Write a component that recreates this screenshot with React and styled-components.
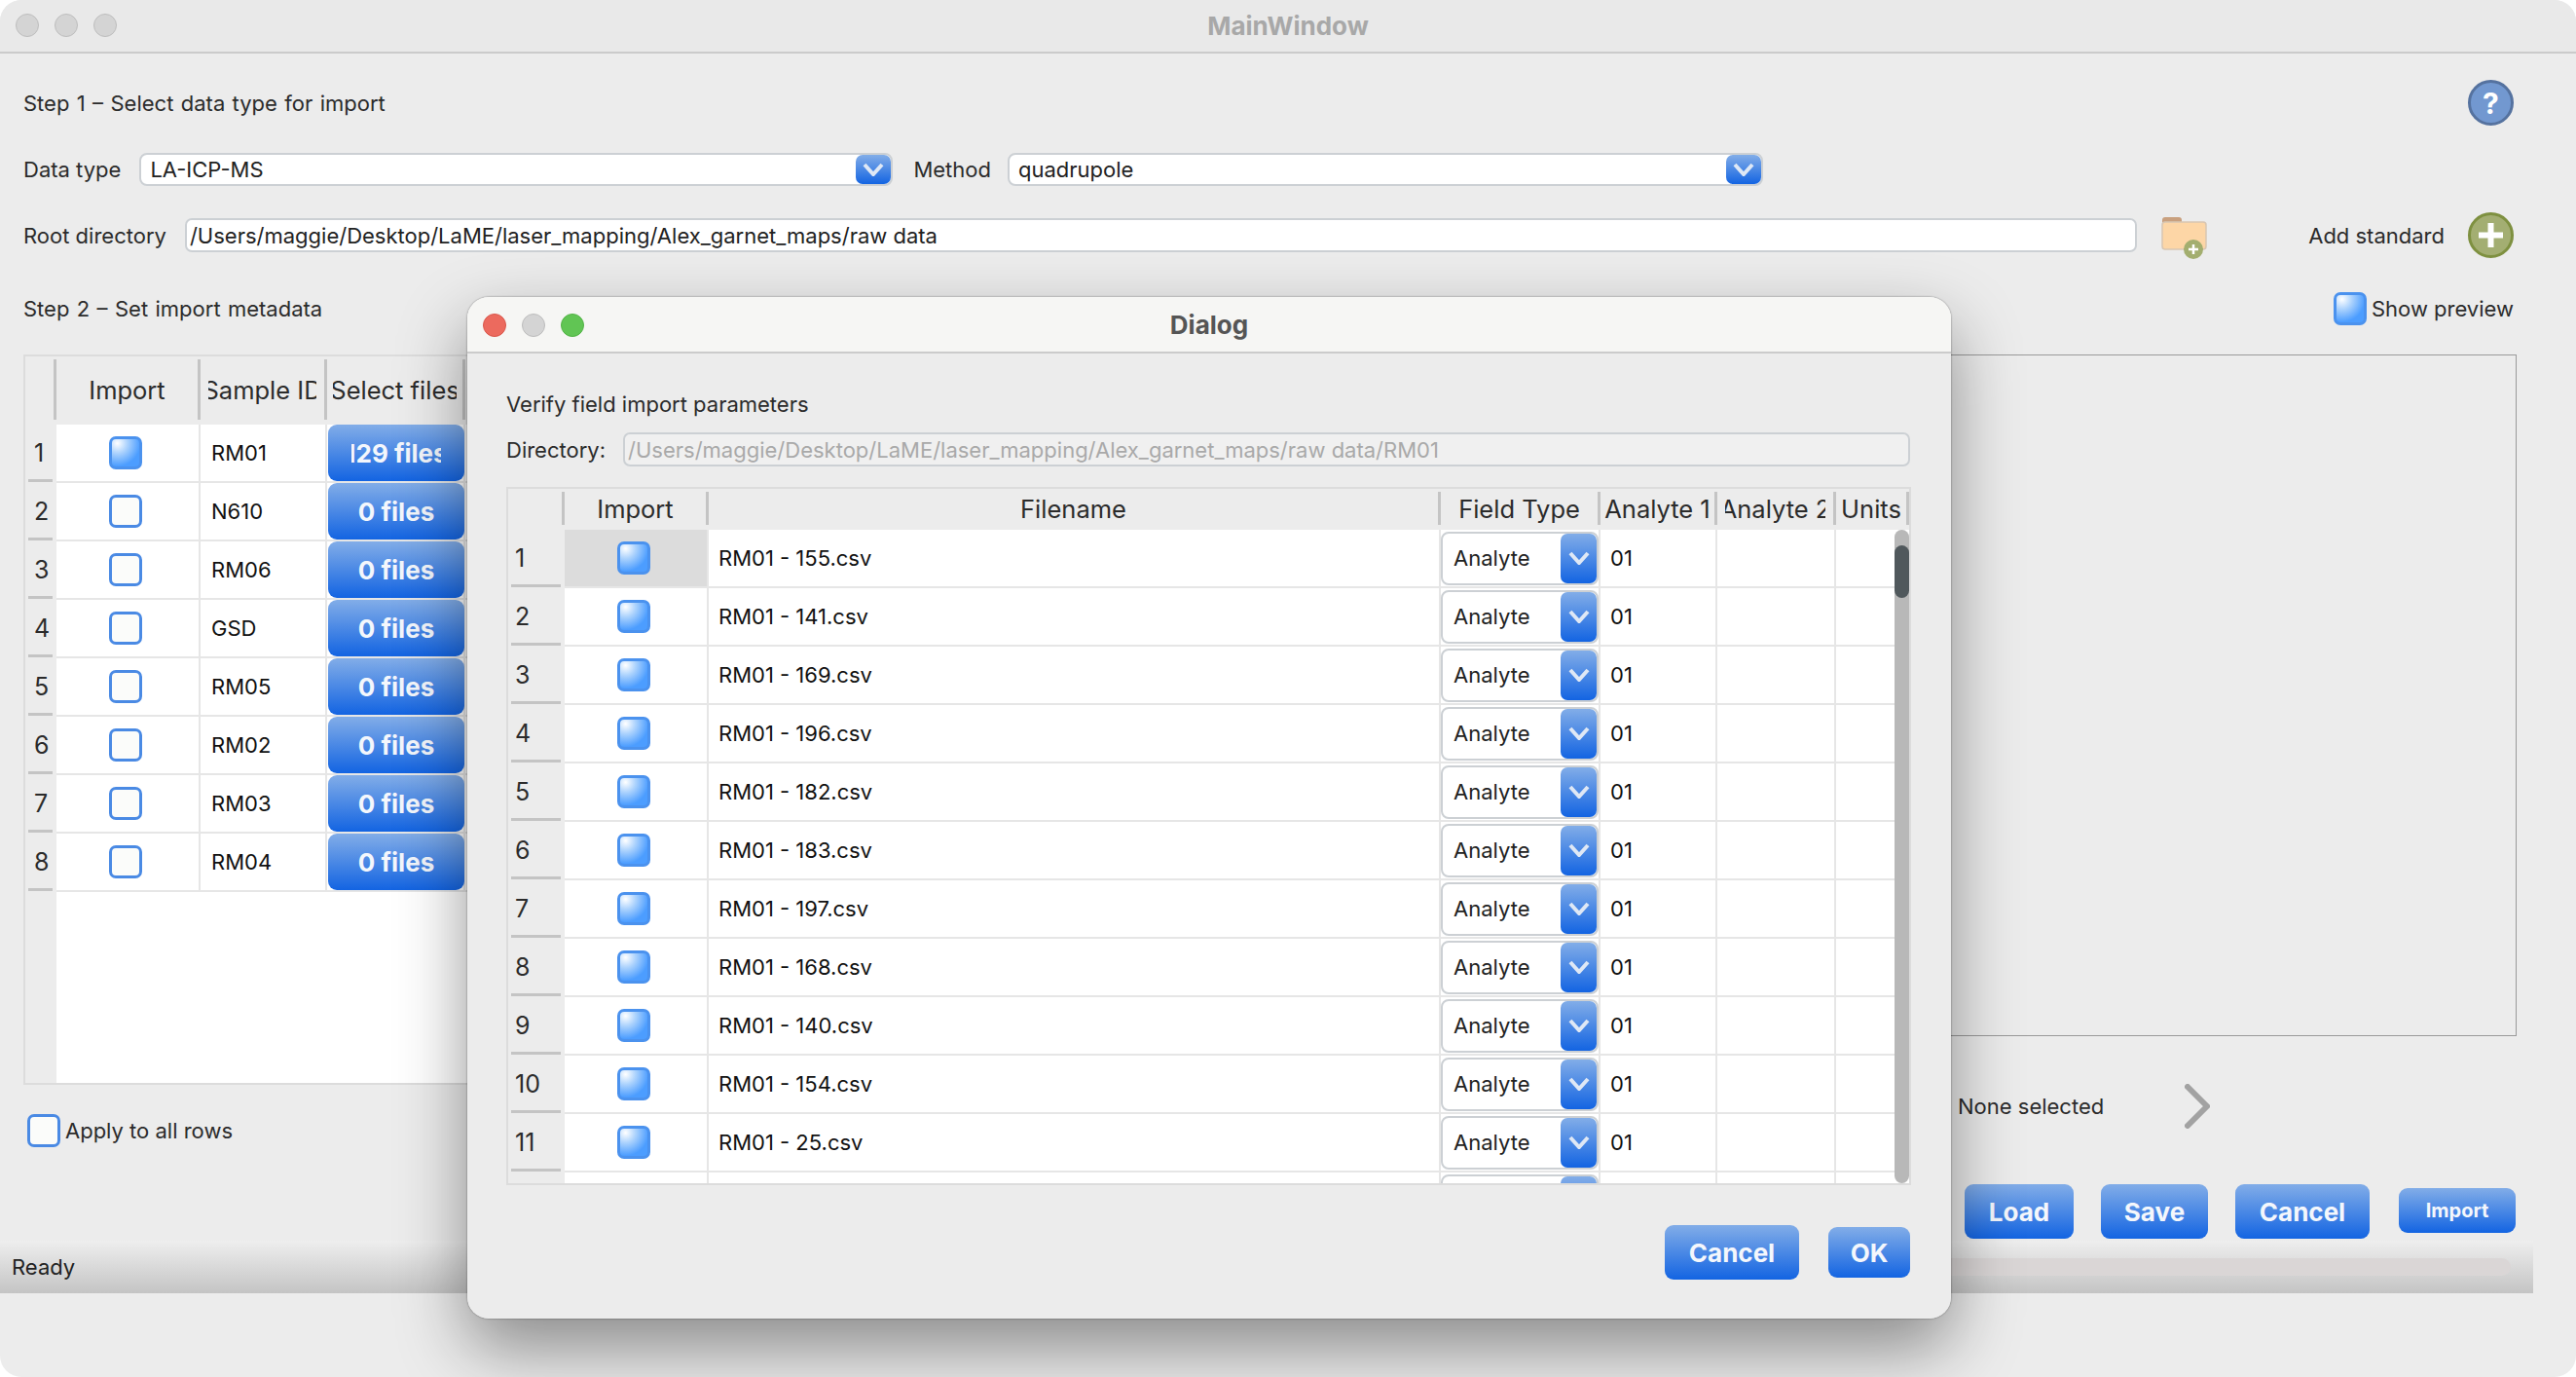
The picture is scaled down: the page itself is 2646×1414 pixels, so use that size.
import React from 'react'
import styled, { createGlobalStyle } from 'styled-components'

const GlobalStyle = createGlobalStyle`
  html, body {
    margin: 0;
    padding: 0;
    background: #fff;
  }
  * {
    box-sizing: border-box;
  }
  body {
    font-family: Inter, "Liberation Sans", sans-serif;
    color: #2b2b2b;
  }
`

const blue = 'linear-gradient(180deg, #82ade8 0%, #1364e2 100%)'

const samples = ['RM01', 'N610', 'RM06', 'GSD', 'RM05', 'RM02', 'RM03', 'RM04']
const files = ['155', '141', '169', '196', '182', '183', '197', '168', '140', '154', '25']

const leftCols = '32px 148px 130px 142px 1fr'
const dialogCols = '58px 148px 752px 164px 120px 122px 75px'

const Chevron = ({ w = 22, h = 14 }) => (
  <svg width={w} height={h} viewBox="0 0 22 14">
    <polyline points="2,2 11,12 20,2" fill="none" stroke="#dfe8f5" strokeWidth="4" />
  </svg>
)

const FolderIcon = () => (
  <svg width="48" height="48" viewBox="0 0 48 48">
    <path d="M1 8 a3 3 0 0 1 3 -3 h14 a3 3 0 0 1 3 3 v3 H1z" fill="#c9a07e" />
    <rect x="1" y="10" width="45" height="28" rx="3" fill="#fdd6a6" stroke="#d8c6b2" strokeWidth="1.5" />
    <circle cx="33" cy="38" r="10" fill="#a3ae6f" />
    <path d="M33 33 v10 M28 38 h10" stroke="#fff" strokeWidth="2.5" />
  </svg>
)

const PlusIcon = () => (
  <svg width="47" height="47" viewBox="0 0 47 47">
    <circle cx="23.5" cy="23.5" r="22" fill="#a3ae72" stroke="#7e9040" strokeWidth="3" />
    <path d="M23.5 11 v25 M11 23.5 h25" stroke="#fff" strokeWidth="6" />
  </svg>
)

const RightChevron = () => (
  <svg width="26" height="46" viewBox="0 0 26 46">
    <polyline points="3,3 23,23 3,43" fill="none" stroke="#a2a2a2" strokeWidth="6" strokeLinecap="round" strokeLinejoin="round" />
  </svg>
)

const Window = styled.div`
  position: relative;
  width: 2646px;
  height: 1414px;
  display: flex;
  flex-direction: column;
  background: #ececec;
  border-radius: 22px;
  overflow: hidden;
`

const TitleBar = styled.div`
  position: relative;
  flex: none;
  height: ${(p) => (p.$dialog ? 58 : 55)}px;
  display: flex;
  align-items: center;
  justify-content: center;
  background: ${(p) => (p.$dialog ? '#f6f6f4' : '#e9e9e9')};
  border-bottom: 2px solid #cbcbcb;
  font-size: 26px;
  font-weight: 700;
  color: ${(p) => (p.$dialog ? '#555' : '#a8a8a8')};
`

const Lights = styled.div`
  position: absolute;
  left: ${(p) => p.$left}px;
  top: ${(p) => p.$top}px;
  display: flex;
  gap: 16px;
`

const Light = styled.span`
  width: 24px;
  height: 24px;
  border-radius: 50%;
  background: ${(p) => p.$color || '#d4d4d4'};
  border: 1px solid ${(p) => p.$edge || '#bdbdbd'};
`

const Content = styled.div`
  flex: none;
  height: 1219px;
  display: flex;
  flex-direction: column;
  padding: 27px 64px 0 24px;
`

const TopRow = styled.div`
  flex: none;
  height: ${(p) => p.$height}px;
  margin-top: ${(p) => p.$top || 0}px;
  display: flex;
  align-items: center;
  font-size: 22px;
`

const Label = styled.span`
  margin-left: ${(p) => p.$left || 0}px;
  white-space: nowrap;
  color: #2b2b2b;
`

const StepLabel = styled(Label)`
  word-spacing: 1.2px;
`

const Spacer = styled.div`
  flex: 1;
`

const RoundIcon = styled.div`
  width: 47px;
  height: 47px;
  border-radius: 50%;
  display: flex;
  align-items: center;
  justify-content: center;
  background: #7298d0;
  border: 3px solid #55729f;
  color: #fff;
  font-size: 30px;
  font-weight: 700;
`

const ComboBox = styled.div`
  width: ${(p) => (p.$width ? `${p.$width}px` : '100%')};
  height: ${(p) => p.$height}px;
  margin-left: ${(p) => p.$left || 0}px;
  padding-left: ${(p) => p.$pad || 9}px;
  display: flex;
  align-items: center;
  justify-content: space-between;
  background: #fff;
  border: 2px solid #ccd0d4;
  border-radius: 8px;
  font-size: 22px;
  color: #222;
`

const ComboArrow = styled.div`
  width: ${(p) => p.$width}px;
  height: 100%;
  display: flex;
  align-items: center;
  justify-content: center;
  background: ${blue};
  border-radius: 7px;
`

const PathInput = styled.div`
  height: 35px;
  width: ${(p) => p.$width}px;
  margin-left: ${(p) => p.$left}px;
  padding-left: 3px;
  display: flex;
  align-items: center;
  background: ${(p) => (p.$disabled ? '#f0f0f0' : '#fff')};
  border: 2px solid #ccd0d4;
  border-radius: 7px;
  font-size: 22px;
  color: ${(p) => (p.$disabled ? '#a9a9a9' : '#222')};
`

const FolderSlot = styled.div`
  margin-left: 25px;
  height: 47px;
  line-height: 0;
`

const PlusSlot = styled.div`
  margin-left: 24px;
  line-height: 0;
`

const CheckBox = styled.span`
  flex: none;
  display: inline-block;
  width: 34px;
  height: 34px;
  border-radius: 7px;
  border: 3px solid ${(p) => (p.$on ? '#4b92ee' : '#4a8ae4')};
  background: ${(p) =>
    p.$on
      ? 'radial-gradient(circle at 20% 15%, #ffffff 0%, #abd2fd 32%, #4c9dff 72%)'
      : '#fbfcfa'};
`

const CheckLabel = styled.div`
  display: flex;
  align-items: center;
  gap: 5px;
  font-size: 22px;
`

const Panes = styled.div`
  flex: none;
  margin-top: 30px;
  display: grid;
  grid-template-columns: 900px 1fr;
  column-gap: 40px;
`

const LeftPane = styled.div`
  display: flex;
  flex-direction: column;
`

const RightPane = styled.div`
  margin-right: -3px;
  display: flex;
  flex-direction: column;
  align-items: flex-end;
`

const Table = styled.div`
  position: relative;
  height: ${(p) => p.$height}px;
  width: ${(p) => (p.$width ? `${p.$width}px` : '100%')};
  background: linear-gradient(90deg, #ececec ${(p) => p.$head}px, #fff ${(p) => p.$head}px);
  border: 2px solid #dcdcdc;
  overflow: hidden;
`

const HeaderRow = styled.div`
  display: grid;
  grid-template-columns: ${(p) => p.$cols};
  height: ${(p) => p.$height}px;
  padding: 3px 0 5px;
  background: #ececec;
`

const HeaderCell = styled.div`
  display: flex;
  align-items: center;
  justify-content: center;
  overflow: hidden;
  padding: 0 ${(p) => p.$clip || 0}px;
  border-right: 3px solid #c4c4c4;
  font-size: 25.5px;
  color: #2b2b2b;
`

const Clip = styled.span`
  display: flex;
  justify-content: center;
  width: ${(p) => (p.$width ? `${p.$width}px` : '100%')};
  overflow: hidden;
  white-space: nowrap;
`

const Row = styled.div`
  display: grid;
  grid-template-columns: ${(p) => p.$cols};
  height: 60px;
`

const RowNumber = styled.div`
  position: relative;
  display: flex;
  align-items: center;
  padding-left: ${(p) => p.$pad}px;
  padding-bottom: 2px;
  background: #ececec;
  font-size: 25px;
  color: #2b2b2b;

  &::after {
    content: '';
    position: absolute;
    left: 3px;
    right: 4px;
    bottom: 1px;
    height: 3px;
    background: #c4c4c4;
  }
`

const Cell = styled.div`
  display: flex;
  align-items: center;
  justify-content: ${(p) => (p.$center ? 'center' : 'flex-start')};
  padding-left: ${(p) => p.$pad || 0}px;
  background: ${(p) => (p.$shade ? '#dcdcdc' : '#fff')};
  border-right: 2px solid #e6e6e6;
  border-bottom: 2px solid #e6e6e6;
  font-size: 22px;
  color: #111;
  min-width: 0;
`

const PlainCell = styled.div`
  background: #fff;
  border-bottom: 2px solid #e6e6e6;
`

const CheckOffset = styled.div`
  margin-left: ${(p) => p.$left}px;
  line-height: 0;
`

const BlueButton = styled.div`
  flex: none;
  width: ${(p) => p.$width}px;
  height: ${(p) => p.$height}px;
  margin-left: ${(p) => p.$left || 0}px;
  margin-top: ${(p) => p.$top || 0}px;
  display: flex;
  align-items: center;
  justify-content: center;
  overflow: hidden;
  background: ${blue};
  border-radius: 9px;
  font-size: ${(p) => p.$size || 26}px;
  font-weight: 700;
  color: #f4f7fc;
`

const ApplyRow = styled.div`
  margin-top: 30px;
  padding-left: 4px;
`

const PreviewFrame = styled.div`
  width: 100%;
  height: 700px;
  border: 1.5px solid #9a9a9a;
`

const SelectRow = styled.div`
  width: 100%;
  height: 46px;
  margin-top: 49px;
  display: flex;
  align-items: center;
  gap: 83px;
  font-size: 22px;
  padding-left: 1047px;
`

const ActionRow = styled.div`
  margin-top: 57px;
  margin-right: 1px;
  display: flex;
  align-items: flex-start;
  gap: 28px;
`

const StatusBar = styled.div`
  flex: none;
  width: 2602px;
  height: 54px;
  display: flex;
  align-items: center;
  justify-content: space-between;
  padding: 0 23px 0 12px;
  background: linear-gradient(180deg, #eeeeee 0%, #c4c4c4 100%);
  font-size: 22px;
  color: #222;
`

const Progress = styled.div`
  width: 1400px;
  height: 18px;
  border-radius: 9px;
  background: #dad6d6;
`

const Dialog = styled.div`
  position: absolute;
  left: 480px;
  top: 305px;
  width: 1524px;
  height: 1049px;
  display: flex;
  flex-direction: column;
  background: #ececec;
  border-radius: 22px;
  overflow: hidden;
`

const DialogShadow = styled.div`
  position: absolute;
  left: 480px;
  top: 305px;
  width: 1524px;
  height: 1049px;
  border-radius: 22px;
  box-shadow: 0 30px 70px rgba(0, 0, 0, 0.42), 0 0 2px rgba(0, 0, 0, 0.5);
`

const DialogBody = styled.div`
  flex: 1;
  display: flex;
  flex-direction: column;
  padding: 0 42px 0 40px;
`

const DialogLabel = styled.div`
  margin-top: 39px;
  height: 26px;
  display: flex;
  align-items: center;
  font-size: 22px;
`

const DirectoryRow = styled.div`
  margin-top: 16px;
  display: flex;
  align-items: center;
  font-size: 22px;
`

const TableSpace = styled.div`
  margin-top: 21px;
`

const Scrollbar = styled.div`
  position: absolute;
  right: 0;
  top: 42px;
  bottom: 0;
  width: 15px;
  border-radius: 8px;
  background: #b8b8b8;
`

const ScrollThumb = styled.div`
  margin-top: 16px;
  height: 54px;
  border-radius: 8px;
  background: #50585c;
`

const DialogActions = styled.div`
  margin-top: 41px;
  display: flex;
  align-items: center;
  justify-content: flex-end;
  gap: 30px;
`

const Combo = ({ width, height, left, pad, arrow, children }) => (
  <ComboBox $width={width} $height={height} $left={left} $pad={pad}>
    {children}
    <ComboArrow $width={arrow}>
      <Chevron />
    </ComboArrow>
  </ComboBox>
)

const MainContent = () => (
  <Content>
    <TopRow $height={47}>
      <StepLabel>Step 1 – Select data type for import</StepLabel>
      <Spacer />
      <RoundIcon>?</RoundIcon>
    </TopRow>
    <TopRow $height={34} $top={28}>
      <Label>Data type</Label>
      <Combo width={774} height={34} left={19} arrow={36}>LA-ICP-MS</Combo>
      <Label $left={21}>Method</Label>
      <Combo width={776} height={34} left={17} arrow={36}>quadrupole</Combo>
    </TopRow>
    <TopRow $height={47} $top={27}>
      <Label>Root directory</Label>
      <PathInput $width={2005} $left={19}>
        /Users/maggie/Desktop/LaME/laser_mapping/Alex_garnet_maps/raw data
      </PathInput>
      <FolderSlot><FolderIcon /></FolderSlot>
      <Spacer />
      <Label>Add standard</Label>
      <PlusSlot><PlusIcon /></PlusSlot>
    </TopRow>
    <TopRow $height={34} $top={35}>
      <StepLabel>Step 2 – Set import metadata</StepLabel>
      <Spacer />
      <CheckLabel><CheckBox $on />Show preview</CheckLabel>
    </TopRow>
    <Panes>
      <LeftPane>
        <Table $height={750} $head={32}>
          <HeaderRow $cols={leftCols} $height={70}>
            <HeaderCell />
            <HeaderCell>Import</HeaderCell>
            <HeaderCell $clip={8}><Clip>Sample ID</Clip></HeaderCell>
            <HeaderCell $clip={6}><Clip>Select files</Clip></HeaderCell>
          </HeaderRow>
          {samples.map((s, i) => (
            <Row key={s} $cols={leftCols}>
              <RowNumber $pad={9}>{i + 1}</RowNumber>
              <Cell $center><CheckOffset $left={-4}><CheckBox $on={i === 0} /></CheckOffset></Cell>
              <Cell $pad={11}>{s}</Cell>
              <Cell>
                <BlueButton $width={140} $height={58} $left={1}>
                  {i === 0 ? <Clip $width={92}>129 files</Clip> : '0 files'}
                </BlueButton>
              </Cell>
              <PlainCell />
            </Row>
          ))}
        </Table>
        <ApplyRow><CheckLabel><CheckBox />Apply to all rows</CheckLabel></ApplyRow>
      </LeftPane>
      <RightPane>
        <PreviewFrame />
        <SelectRow>
          <Label>None selected</Label>
          <RightChevron />
        </SelectRow>
        <ActionRow>
          <BlueButton $width={112} $height={56}>Load</BlueButton>
          <BlueButton $width={110} $height={56}>Save</BlueButton>
          <BlueButton $width={138} $height={56}>Cancel</BlueButton>
          <BlueButton $width={120} $height={46} $size={20} $left={2} $top={4}><Clip $width={72}>Import</Clip></BlueButton>
        </ActionRow>
      </RightPane>
    </Panes>
  </Content>
)

const DialogWindow = () => (
  <Dialog>
    <TitleBar $dialog>
      <Lights $left={16} $top={17}>
        <Light $color="#ec6a5e" $edge="#d9574b" />
        <Light />
        <Light $color="#61c554" $edge="#52b346" />
      </Lights>
      Dialog
    </TitleBar>
    <DialogBody>
      <DialogLabel>Verify field import parameters</DialogLabel>
      <DirectoryRow>
        <Label>Directory:</Label>
        <PathInput $width={1323} $left={18} $disabled>
          /Users/maggie/Desktop/LaME/laser_mapping/Alex_garnet_maps/raw data/RM01
        </PathInput>
      </DirectoryRow>
      <TableSpace>
        <Table $height={717} $width={1443} $head={58}>
          <HeaderRow $cols={dialogCols} $height={42}>
            <HeaderCell />
            <HeaderCell>Import</HeaderCell>
            <HeaderCell>Filename</HeaderCell>
            <HeaderCell>Field Type</HeaderCell>
            <HeaderCell $clip={3}><Clip>Analyte 1</Clip></HeaderCell>
            <HeaderCell $clip={8}><Clip>Analyte 2</Clip></HeaderCell>
            <HeaderCell><Clip>Units</Clip></HeaderCell>
          </HeaderRow>
          {[...files, ''].map((f, i) => (
            <Row key={i} $cols={dialogCols}>
              <RowNumber $pad={7}>{i + 1}</RowNumber>
              <Cell $center $shade={i === 0}><CheckOffset $left={-4}><CheckBox $on /></CheckOffset></Cell>
              <Cell $pad={10}>{f && `RM01 - ${f}.csv`}</Cell>
              <Cell>
                <Combo height={55} arrow={37} pad={11}>Analyte</Combo>
              </Cell>
              <Cell $pad={10}>01</Cell>
              <Cell />
              <PlainCell />
            </Row>
          ))}
          <Scrollbar><ScrollThumb /></Scrollbar>
        </Table>
      </TableSpace>
      <DialogActions>
        <BlueButton $width={138} $height={56}>Cancel</BlueButton>
        <BlueButton $width={84} $height={52}><Clip $width={50}>OK</Clip></BlueButton>
      </DialogActions>
    </DialogBody>
  </Dialog>
)

const App = () => (
  <>
    <GlobalStyle />
    <Window>
      <TitleBar>
        <Lights $left={16} $top={14}>
          <Light />
          <Light />
          <Light />
        </Lights>
        MainWindow
      </TitleBar>
      <MainContent />
      <StatusBar>
        Ready
        <Progress />
      </StatusBar>
      <DialogShadow />
      <DialogWindow />
    </Window>
  </>
)

export default App
